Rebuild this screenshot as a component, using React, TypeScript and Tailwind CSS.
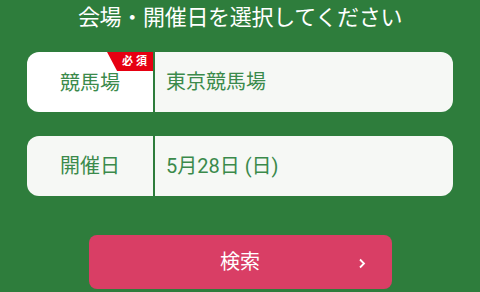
import React from "react";

export default function App() {
  return (
    <div
      className="w-[480px] h-[292px] overflow-hidden bg-[#2e7d3c] flex flex-col items-center"
      style={{ fontFamily: '"Roboto", "Noto Sans CJK JP", sans-serif' }}
    >
      <div className="mt-[2px] h-[32px] leading-[32px] text-[22px] text-white tracking-[-0.3px]">
        会場・開催日を選択してください
      </div>
      <div className="mt-[18px] w-[426px] h-[60px] flex gap-[2px]">
        <div className="relative w-[126px] h-full bg-white rounded-l-[12px] flex items-center justify-center text-[20px] text-[#3b8a4b]">
          <div className="absolute top-0 right-0 w-[46px] h-[19px] bg-[#e60012] [clip-path:polygon(0_0,100%_0,100%_100%,22%_100%)] flex items-center justify-center pl-[12px] text-[11px] font-bold leading-none text-white tracking-[3px]">
            必須
          </div>
          <span className="mt-[1px]">競馬場</span>
        </div>
        <div className="flex-1 h-full bg-[#f6f8f5] rounded-r-[12px] flex items-center pl-[11px] text-[20px] text-[#3b8a4b]">
          東京競馬場
        </div>
      </div>
      <div className="mt-[24px] w-[426px] h-[60px] flex gap-[2px]">
        <div className="w-[126px] h-full bg-[#f6f8f5] rounded-l-[12px] flex items-center justify-center text-[20px] text-[#3b8a4b]">
          開催日
        </div>
        <div className="flex-1 h-full bg-[#f6f8f5] rounded-r-[12px] flex items-center pl-[11px] text-[20px] text-[#3b8a4b]">
          5月28日 (日)
        </div>
      </div>
      <div className="mt-[39px] relative w-[303px] h-[54px] rounded-[8px] bg-[#d93e65] flex items-center justify-center text-[20px] text-white">
        検索
        <svg
          className="absolute right-[26px] top-[23px]"
          width="8"
          height="11"
          viewBox="0 0 8 11"
          fill="none"
        >
          <path d="M2 1.5 L6 5.5 L2 9.5" stroke="white" strokeWidth="1.8" />
        </svg>
      </div>
    </div>
  );
}
